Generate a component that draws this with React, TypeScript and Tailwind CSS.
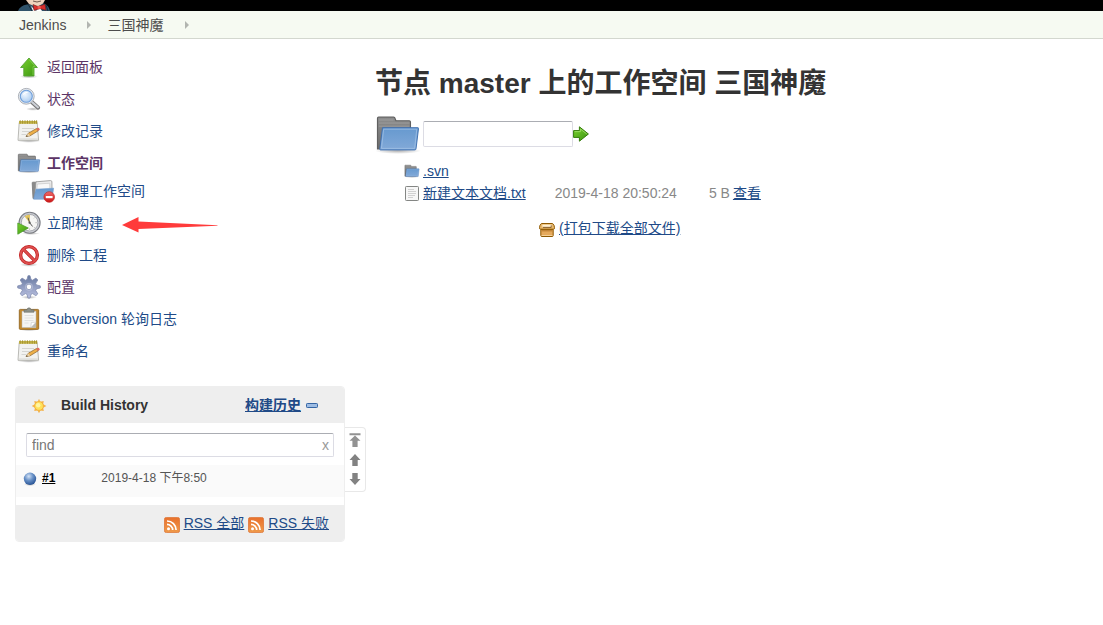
import type { ReactNode } from 'react';

type IconProps = { className?: string };

function Gradients() {
  return (
    <svg className="absolute h-0 w-0" aria-hidden="true">
      <defs>
        <linearGradient id="blueFolder" x1="0" y1="0" x2="0" y2="1">
          <stop offset="0" stopColor="#6699cf" />
          <stop offset="1" stopColor="#82a9d8" />
        </linearGradient>
        <linearGradient id="greyFolder" x1="0" y1="0" x2="0" y2="1">
          <stop offset="0" stopColor="#8e8e8e" />
          <stop offset="1" stopColor="#6c6c6c" />
        </linearGradient>
        <linearGradient id="green" x1="0" y1="0" x2="1" y2="1">
          <stop offset="0" stopColor="#7ad12f" />
          <stop offset="1" stopColor="#3a9411" />
        </linearGradient>
        <linearGradient id="gear" x1="0" y1="0" x2="0" y2="1">
          <stop offset="0" stopColor="#66789f" />
          <stop offset="1" stopColor="#bcc2e2" />
        </linearGradient>
        <linearGradient id="rss" x1="0" y1="0" x2="0" y2="1">
          <stop offset="0" stopColor="#e8702c" />
          <stop offset="1" stopColor="#ef9a4a" />
        </linearGradient>
        <linearGradient id="red" x1="0" y1="0" x2="0" y2="1">
          <stop offset="0" stopColor="#ef6a6a" />
          <stop offset="1" stopColor="#cc1414" />
        </linearGradient>
        <radialGradient id="ball" cx="0.4" cy="0.3" r="0.7">
          <stop offset="0" stopColor="#d3e2f6" />
          <stop offset="0.5" stopColor="#6790c6" />
          <stop offset="1" stopColor="#2a5596" />
        </radialGradient>
        <radialGradient id="lens" cx="0.4" cy="0.35" r="0.7">
          <stop offset="0" stopColor="#f0f7ff" />
          <stop offset="1" stopColor="#a9caef" />
        </radialGradient>
        <radialGradient id="shade">
          <stop offset="0" stopColor="#000" stopOpacity="0.3" />
          <stop offset="1" stopColor="#000" stopOpacity="0" />
        </radialGradient>
      </defs>
    </svg>
  );
}

function UpIcon() {
  return (
    <svg viewBox="0 0 24 24" className="size-6 shrink-0">
      <ellipse cx="12" cy="21.5" rx="9" ry="2" fill="url(#shade)" />
      <path d="M12 3 20.4 12.5H17V21H6.8V12.5H3.6Z" fill="url(#green)" stroke="#55a332" strokeWidth=".9" />
      <path d="M12 4.4 18.2 11.6H16V20" fill="none" stroke="#8bd854" strokeWidth=".7" />
    </svg>
  );
}

function SearchIcon() {
  return (
    <svg viewBox="0 0 24 24" className="size-6 shrink-0">
      <ellipse cx="16" cy="22" rx="7" ry="1.8" fill="url(#shade)" />
      <path d="m14.5 14.7 6.6 6" stroke="#777" strokeWidth="4" strokeLinecap="round" />
      <path d="m14.7 14.7 6.2 5.6" stroke="#ccd0d6" strokeWidth="2.2" strokeLinecap="round" />
      <circle cx="9.3" cy="9.3" r="7.9" fill="#e9ebee" stroke="#a3a8b0" strokeWidth=".9" />
      <circle cx="9.3" cy="9.3" r="6" fill="url(#lens)" stroke="#6f9fdb" strokeWidth="1.1" />
      <path d="M5.5 8.5c1-3.5 4-4.2 6.5-3-2 .2-4.5 1-6.5 3Z" fill="#fff" />
    </svg>
  );
}

function NotepadIcon() {
  return (
    <svg viewBox="0 0 24 24" className="size-6 shrink-0">
      <ellipse cx="12" cy="22" rx="11.5" ry="1.8" fill="url(#shade)" />
      <path d="M2.2 3.5h18l1.4 17.8H1Z" fill="#f2f2f0" stroke="#a9a9a4" strokeWidth=".8" />
      <path d="M2 2h18.2v2.8H2Z" fill="#c6b64d" />
      <path d="M3.2 1.2v3.6M5.6 1.2v3.6M8 1.2v3.6M10.4 1.2v3.6M12.8 1.2v3.6M15.2 1.2v3.6M17.6 1.2v3.6M19.6 1.2v3.6" stroke="#9c8a24" strokeWidth=".8" />
      <path d="M5 9.5h12M5 12.5h8M4.5 15.5h5" stroke="#d5d5d2" />
      <path d="M1.8 20h19" stroke="#d8d8d5" />
      <path d="m9 17.6 2.3-3.4 8.2-4.7 1.7 2.3-8.1 5Z" fill="#eeb04a" stroke="#87602a" strokeWidth=".7" />
      <path d="m9 17.6 2.3-3.4 1.8 2.6Z" fill="#ecd3a8" />
      <path d="m9 17.6.9-1.4.9 1Z" fill="#222" />
      <path d="m19.2 9.7 1.6-.9c1-.5 2.6 1.6 1.7 2.3l-1.6 1Z" fill="#df6a5e" />
    </svg>
  );
}

function FolderIcon({ className = 'size-6' }: IconProps) {
  return (
    <svg viewBox="0 0 24 24" className={`${className} shrink-0`}>
      <ellipse cx="12" cy="20.8" rx="12" ry="1.6" fill="url(#shade)" />
      <path d="M1.3 19.8V3.8q0-.6.6-.6h7.8q.6 0 .8.7l.4 1.2h7q.6 0 .6.6V19.8Z" fill="url(#greyFolder)" stroke="#606060" strokeWidth=".6" />
      <path d="M2 4.7h7.6M2 6.3h16M2 7.9h16" stroke="#a4a4a4" strokeWidth=".4" />
      <path d="M3.9 8.7h18.5q.4 0 .3.5L21.4 19.7q0 .6-.6.6H2.9q-.5 0-.4-.6Z" fill="url(#blueFolder)" stroke="#3f70b0" strokeWidth=".5" />
      <path d="M4.5 9.5H21.8L20.7 19.5H3.4Z" fill="none" stroke="#a8c6e8" strokeWidth=".35" />
    </svg>
  );
}

function WipeIcon() {
  return (
    <svg viewBox="0 0 24 24" className="size-6 shrink-0">
      <path d="M2 19.5 1.2 3.8q0-.6.6-.6h4L7.5 6v13.5Z" fill="#8a8a8a" stroke="#777" strokeWidth=".8" />
      <path d="m5 2.8 14.5-1.2q1.3 0 1.4 1.2L21 13H4Z" fill="#ededed" stroke="#929292" strokeWidth=".8" />
      <path d="m6.3 5 12.5-.8.2 8H5.6Z" fill="#f9f9f9" stroke="#c5c5c5" strokeWidth=".7" />
      <path d="M5 10.2 22.6 9.2 21 20.2H2.6Z" fill="url(#blueFolder)" stroke="#6d9bcf" strokeWidth=".6" />
      <circle cx="18.2" cy="18" r="5.3" fill="url(#red)" stroke="#c22b2b" strokeWidth=".7" />
      <path d="M14.8 17h6.8v2.2h-6.8Z" fill="#fff" />
    </svg>
  );
}

function BuildIcon() {
  return (
    <svg viewBox="0 0 24 24" className="size-6 shrink-0">
      <ellipse cx="14" cy="22.6" rx="9" ry="1.3" fill="url(#shade)" />
      <circle cx="12.6" cy="11.7" r="10.5" fill="#c9cbd2" stroke="#7c7e84" strokeWidth="1.1" />
      <circle cx="12.6" cy="11.7" r="8.3" fill="#f6f6f4" stroke="#9b9da3" strokeWidth=".8" />
      <path d="M12.6 11.7 7.6 5.6Q10 3.6 13 3.9Z" fill="#e3c45b" />
      <path d="m12.6 11.7-1.6-5M12.6 11.7l3 3.8" stroke="#555" />
      <path d="M19.7 11.7h-1.2M12.6 18.7v-1.2M17.7 6.6l-.7.7M17.7 16.8l-.7-.7" stroke="#999" strokeWidth=".8" />
      <circle cx="12.6" cy="11.7" r="1.1" fill="#555" />
      <path d="M.8 12V23.2L11.3 17Z" fill="url(#green)" stroke="#4b9c2b" strokeWidth=".8" />
    </svg>
  );
}

function DeleteIcon() {
  return (
    <svg viewBox="0 0 24 24" className="size-6 shrink-0">
      <ellipse cx="12" cy="21.6" rx="9" ry="2.2" fill="url(#shade)" />
      <circle cx="12" cy="12" r="8.4" fill="#fff" stroke="#c01e1e" strokeWidth="3.3" />
      <path d="m6.2 6.2 11.6 11.6" stroke="#c01e1e" strokeWidth="3.2" />
      <circle cx="12" cy="12" r="8.4" fill="none" stroke="#de5050" strokeWidth="1.9" />
      <path d="m6.2 6.2 11.6 11.6" stroke="#de5050" strokeWidth="1.8" />
    </svg>
  );
}

function GearIcon() {
  return (
    <svg viewBox="0 0 24 24" className="size-6 shrink-0">
      <ellipse cx="12" cy="22.3" rx="8" ry="1.7" fill="url(#shade)" />
      <path
        fillRule="evenodd"
        d="M11 .7h2l1 3.8 1.6.7 3.3-2.1 1.9 1.9-2.1 3.3.7 1.6 3.9 1v2l-3.9 1-.7 1.6 2.1 3.3-1.9 1.9-3.3-2.1-1.6.7-1 3.8h-2l-1-3.8-1.6-.7-3.3 2.1-1.9-1.9 2.1-3.3-.7-1.6-3.9-1v-2l3.9-1 .7-1.6L3.2 5l1.9-1.9 3.3 2.1 1.6-.7ZM12 9.1a2.8 2.8 0 1 0 0 5.6 2.8 2.8 0 0 0 0-5.6Z"
        fill="url(#gear)"
        stroke="#808bb0"
        strokeWidth=".8"
      />
      <circle cx="12" cy="11.9" r="3.6" fill="none" stroke="#bdc4dc" strokeWidth=".7" />
    </svg>
  );
}

function ClipboardIcon() {
  return (
    <svg viewBox="0 0 24 24" className="size-6 shrink-0">
      <ellipse cx="12" cy="23" rx="9" ry="1" fill="url(#shade)" />
      <rect x="2.3" y="2.4" width="19.4" height="20" rx="1" fill="#c48b30" stroke="#8b5d17" strokeWidth=".8" />
      <path d="M5 4.2h14v16.3H5Z" fill="#f5f5f3" stroke="#bbb" strokeWidth=".5" />
      <path d="M7.5 8.5h9M7.5 11h9M7.5 13.5h9M7.5 16h4" stroke="#dcdcda" strokeWidth=".8" />
      <path d="M13.8 20.5 19 15.2v5.3Z" fill="#b9b9b5" />
      <path d="m13.8 20.5.5-5L19 15.2Z" fill="#fff" stroke="#bbb" strokeWidth=".5" />
      <path d="M7 5.2V2.8h3q.2-2 2-2t2 2h3v2.4Z" fill="#8d918a" stroke="#696b65" strokeWidth=".6" />
    </svg>
  );
}

function RedArrow() {
  return (
    <svg viewBox="0 0 96 16" className="mt-1 ml-[19px] h-4 w-24 shrink-0" aria-hidden="true">
      <path d="M0 8 16.5 0V4.5L95.5 8.2V8.8L16.5 12v3.5Z" fill="#ff3b3b" />
    </svg>
  );
}

function SunIcon() {
  return (
    <svg viewBox="0 0 16 16" className="mt-px size-4 shrink-0">
      <path d="m8 .7 1.3 3L12.7 3l-.5 3.2 3.2 1.9-3.2 1.6.6 3.3-3.4-.6L8 15.3l-1.4-2.9-3.3.6.6-3.3L.7 8.1l3.2-1.9L3.3 3l3.4.7Z" fill="#f4b24a" />
      <circle cx="8" cy="8" r="4.4" fill="#ffe25a" stroke="#f2ae3a" strokeWidth=".8" />
      <circle cx="7.2" cy="7.2" r="2.2" fill="#fff5a3" />
    </svg>
  );
}

function RssIcon() {
  return (
    <svg viewBox="0 0 16 16" className="mt-[3px] size-4 shrink-0">
      <rect x=".4" y=".4" width="15.2" height="15.2" rx="2" fill="url(#rss)" stroke="#dd7433" strokeWidth=".8" />
      <circle cx="4.5" cy="11.7" r="1.5" fill="#fff" />
      <path d="M3 7.4a5.7 5.7 0 0 1 5.7 5.7M3 4a9.1 9.1 0 0 1 9.1 9.1" fill="none" stroke="#fff" strokeWidth="1.7" />
    </svg>
  );
}

function FileIcon() {
  return (
    <svg viewBox="0 0 16 16" className="size-4 shrink-0">
      <rect x="1.5" y="1.5" width="13" height="14" rx=".8" fill="#f7f7f7" stroke="#848684" />
      <path d="M4 4.5h6M4 6.5h8M4 8.5h8M4 10.5h7M4 12.5h5" stroke="#c6c6c6" strokeWidth=".8" />
    </svg>
  );
}

function PackageIcon() {
  return (
    <svg viewBox="0 0 16 16" className="mt-[3px] size-4 shrink-0">
      <path d="M1.8 7.5h12.4v6q0 1-1 1H2.8q-1 0-1-1Z" fill="#e5a95c" stroke="#8f5902" />
      <path d="M2.6 8.8h10.8" stroke="#b3752a" />
      <path d="M2.6 13.5h10.8" stroke="#f5d199" />
      <path d="M2.4 1.5h11.2q1.9 1.5 1.9 4.2 0 1.5-.8 1.5H1.3Q.5 7.2.5 5.7q0-2.7 1.9-4.2Z" fill="#e9b96e" stroke="#8f5902" />
      <path d="M3.4 2.7h9.2v2.2H3.4Z" fill="#fff0d2" />
      <path d="M4 5.4h8.2V3.3" fill="none" stroke="#704b20" strokeWidth=".8" />
    </svg>
  );
}

function GoIcon() {
  return (
    <svg viewBox="0 0 16 16" className="block size-4">
      <path d="M.6 4.6h5.8V.8L15.4 8l-9 7.2v-3.8H.6Z" fill="url(#green)" stroke="#347b0c" />
      <path d="M1.6 5.6h5.8V3L13.8 8" fill="none" stroke="#a5e36d" strokeWidth=".8" />
    </svg>
  );
}

function ButlerIcon() {
  return (
    <svg viewBox="0 0 34 11" className="h-[11px] w-[34px]">
      <path d="M0 11Q2 5.5 9 4.5l17-1q5 2 6 7.5Z" fill="#30536a" />
      <path d="M8 0h19l-2 3.5-6 3.5-8-3Z" fill="#efd4bd" />
      <path d="m13 6 5 5 3-5 3 5h-9Z" fill="#fff" />
      <path d="m15 4.5 5 2 7-2.3 1 6-6-1.5-6 1.7Z" fill="#d92e2b" stroke="#5a1515" strokeWidth=".5" />
      <path d="m19.5 6 3-.2.3 3h-3Z" fill="#ee5b50" />
      <path d="m10 4 4 7M28 5l2 6" stroke="#182d3a" />
      <path d="m15 1 4 1 4-1" fill="none" stroke="#513a30" strokeWidth=".8" />
    </svg>
  );
}

function Separator() {
  return (
    <svg viewBox="0 0 4 8" className="h-2 w-1 shrink-0" aria-hidden="true">
      <path d="M0 0 4 4 0 8Z" fill="#b2b5b0" />
    </svg>
  );
}

type Task = { label: string; icon: ReactNode; visited?: boolean; current?: boolean; sub?: boolean; marked?: boolean };

const tasks: Task[] = [
  { label: '返回面板', icon: <UpIcon />, visited: true },
  { label: '状态', icon: <SearchIcon />, visited: true },
  { label: '修改记录', icon: <NotepadIcon /> },
  { label: '工作空间', icon: <FolderIcon />, visited: true, current: true },
  { label: '清理工作空间', icon: <WipeIcon />, sub: true },
  { label: '立即构建', icon: <BuildIcon />, marked: true },
  { label: '删除 工程', icon: <DeleteIcon /> },
  { label: '配置', icon: <GearIcon />, visited: true },
  { label: 'Subversion 轮询日志', icon: <ClipboardIcon /> },
  { label: '重命名', icon: <NotepadIcon /> },
];

function TaskRow({ task }: { task: Task }) {
  return (
    <li className={task.sub ? 'mb-1 ml-[14px] flex h-6 items-center' : 'flex h-8 items-center'}>
      <a
        href="#"
        className={`flex items-center gap-[6px] ${task.visited ? 'text-[#5c3566]' : 'text-[#204a87]'} ${task.current ? 'font-bold' : ''}`}
      >
        {task.icon}
        <span className="leading-5">{task.label}</span>
      </a>
      {task.marked && <RedArrow />}
    </li>
  );
}

function BuildHistory() {
  return (
    <div className="mt-[19px] flex items-start">
      <section className="min-w-0 flex-1 overflow-hidden rounded border border-[#eee]">
        <header className="flex h-9 items-center bg-[#eee] pr-[26px] pl-[15px]">
          <SunIcon />
          <h2 className="ml-[14px] flex-1 font-bold text-[#333]">Build History</h2>
          <a href="#" className="font-bold text-[#204a87] underline">构建历史</a>
          <button aria-label="收起" className="ml-[5px]">
            <svg viewBox="0 0 12 5" className="h-[5px] w-3">
              <rect x=".5" y=".5" width="11" height="4" rx=".8" fill="#9dbce3" stroke="#3465a4" />
            </svg>
          </button>
        </header>
        <div className="relative mx-[10px] mt-[10px] mb-2">
          <input
            aria-label="find"
            placeholder="find"
            className="block h-6 w-full rounded-xs border border-[#dcdce4] border-t-[#abadb3] px-[5px] outline-none placeholder:text-[#777]"
          />
          <button aria-label="清除" className="absolute top-1 right-[5px] leading-4 text-[#999]">x</button>
        </div>
        <div className="flex h-8 items-start bg-[#fafafa] pt-1 pl-[7px] leading-[18px]">
          <svg viewBox="0 0 14 14" className="mt-[3px] size-[14px]">
            <ellipse cx="7" cy="12.6" rx="6" ry="1.4" fill="url(#shade)" />
            <circle cx="7" cy="6.8" r="6.2" fill="url(#ball)" />
          </svg>
          <a href="#" className="ml-[5px] text-xs leading-[18px] font-bold text-black underline">#1</a>
          <time className="ml-[46px] text-xs leading-[18px] text-[#555]">2019-4-18 下午8:50</time>
        </div>
        <footer className="mt-2 flex h-9 items-center justify-end gap-1 bg-[#eee] pr-[15px] text-[#204a87]">
          <RssIcon />
          <a href="#" className="underline">RSS 全部</a>
          <RssIcon />
          <a href="#" className="underline">RSS 失败</a>
        </footer>
      </section>
      <nav aria-label="构建翻页" className="mt-[41px] flex h-[65px] w-[21px] flex-col items-center gap-[7px] rounded-r border border-l-0 border-[#e8e8e8] pt-[5px]">
        <button aria-label="最新">
          <svg viewBox="0 0 12 14" className="block h-[14px] w-3"><path d="M.5.2h11v2H.5ZM6 2.5l5.5 5.3H8.6V14H3.4V7.8H.5Z" fill="#929292" /></svg>
        </button>
        <button aria-label="较新">
          <svg viewBox="0 0 12 12" className="block size-3"><path d="m6 0 5.5 6H8.7v6H3.3V6H.5Z" fill="#828282" /></svg>
        </button>
        <button aria-label="较旧">
          <svg viewBox="0 0 12 12" className="block size-3"><path d="m6 12 5.5-6H8.7V0H3.3v6H.5Z" fill="#828282" /></svg>
        </button>
      </nav>
    </div>
  );
}

export default function App() {
  return (
    <div className="min-h-screen bg-white text-sm text-[#333] [font-family:'Liberation_Sans','Noto_Sans_CJK_SC',sans-serif]">
      <Gradients />
      <header className="bg-black pl-[18px]">
        <ButlerIcon />
      </header>
      <nav aria-label="breadcrumb" className="flex h-7 items-center border-b border-[#d3d7cf] bg-[#f6faf2] pl-[19px] text-[#4d4d4d]">
        <a href="#" className="mr-[21px]">Jenkins</a>
        <Separator />
        <a href="#" className="mr-[22px] ml-4">三国神魔</a>
        <Separator />
      </nav>
      <div className="flex items-start">
        <aside className="w-[366px] shrink-0 pt-3 pl-[15px]">
          <ul className="pl-[2px]">
            {tasks.map((task) => (
              <TaskRow key={task.label} task={task} />
            ))}
          </ul>
          <BuildHistory />
        </aside>
        <main className="min-w-0 flex-1 pt-[25px] pl-[9px]">
          <h1 className="text-[28px] leading-10 font-bold">节点 master 上的工作空间 三国神魔</h1>
          <form className="mt-[7px] flex items-center" onSubmit={(e) => e.preventDefault()}>
            <FolderIcon className="size-[46px]" />
            <input
              aria-label="路径"
              className="ml-[2px] h-[26px] w-[150px] rounded-xs border border-[#dcdce4] border-t-[#abadb3] px-1 outline-none"
            />
            <button aria-label="前往"><GoIcon /></button>
          </form>
          <table className="mt-[3px] ml-[29px]">
            <tbody>
              <tr className="h-[22px]">
                <td className="pr-[3px]"><FolderIcon className="size-4" /></td>
                <td><a href="#" className="text-[#204a87] underline">.svn</a></td>
                <td colSpan={3} />
              </tr>
              <tr className="h-[22px]">
                <td className="pr-[3px]"><FileIcon /></td>
                <td className="pr-[29px]"><a href="#" className="text-[#204a87] underline">新建文本文档.txt</a></td>
                <td className="pr-8 text-[#888]">2019-4-18 20:50:24</td>
                <td className="pr-[3px] text-[#888]">5 B</td>
                <td><a href="#" className="text-[#204a87] underline">查看</a></td>
              </tr>
            </tbody>
          </table>
          <a href="#" className="mt-[14px] ml-[164px] flex w-fit items-center gap-1 text-[#204a87] underline">
            <PackageIcon />
            <span>(打包下载全部文件)</span>
          </a>
        </main>
      </div>
    </div>
  );
}
